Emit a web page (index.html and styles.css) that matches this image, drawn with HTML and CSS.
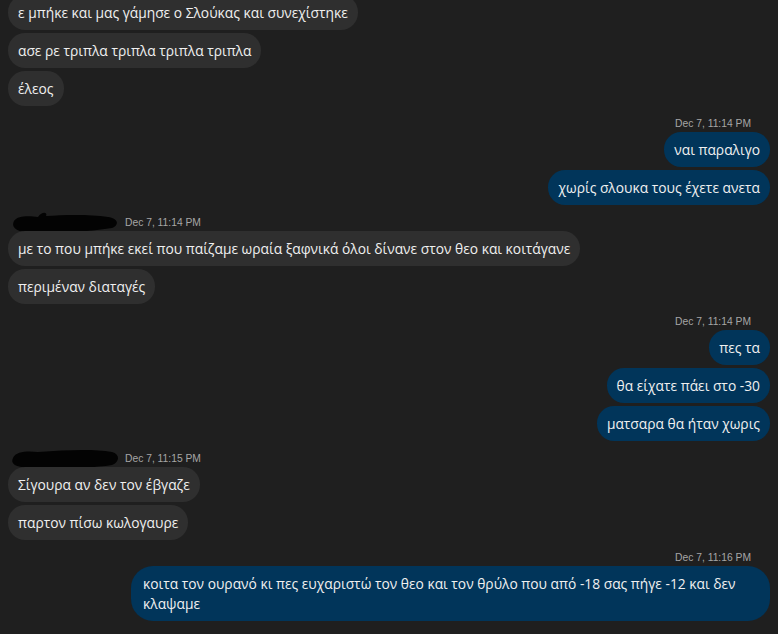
FILE: index.html
```html
<!DOCTYPE html>
<html lang="el">
<head>
<meta charset="utf-8">
<title>Chat</title>
<link rel="stylesheet" href="styles.css">
</head>
<body>
<div class="chat">
  <div class="group in first">
    <div class="bubble">ε μπήκε και μας γάμησε ο Σλούκας και συνεχίστηκε</div>
    <div class="bubble">ασε ρε τριπλα τριπλα τριπλα τριπλα</div>
    <div class="bubble">έλεος</div>
  </div>

  <div class="group out">
    <div class="meta"><span class="time">Dec 7, 11:14 PM</span></div>
    <div class="bubble">ναι παραλιγο</div>
    <div class="bubble">χωρίς σλουκα τους έχετε ανετα</div>
  </div>

  <div class="group in">
    <div class="meta">
      <svg class="redact" width="112" height="26" viewBox="0 0 112 26"><path d="M6 12 C10 6 22 7 30 8 C34 2 40 3 38 7 C55 6 80 5 100 8 C110 9 112 16 104 19 C80 23 50 24 28 24 C12 24 2 20 6 12 Z" fill="#030303"/></svg>
      <span class="time">Dec 7, 11:14 PM</span>
    </div>
    <div class="bubble">με το που μπήκε εκεί που παίζαμε ωραία ξαφνικά όλοι δίνανε στον θεο και κοιτάγανε</div>
    <div class="bubble">περιμέναν διαταγές</div>
  </div>

  <div class="group out">
    <div class="meta"><span class="time">Dec 7, 11:14 PM</span></div>
    <div class="bubble">πες τα</div>
    <div class="bubble">θα είχατε πάει στο -30</div>
    <div class="bubble">ματσαρα θα ήταν χωρις</div>
  </div>

  <div class="group in">
    <div class="meta">
      <svg class="redact" width="112" height="26" viewBox="0 0 112 26"><path d="M5 13 C8 6 20 6 30 7 C60 5 85 4 104 7 C112 9 112 17 104 20 C80 24 40 23 20 23 C8 22 2 19 5 13 Z" fill="#030303"/></svg>
      <span class="time">Dec 7, 11:15 PM</span>
    </div>
    <div class="bubble">Σίγουρα αν δεν τον έβγαζε</div>
    <div class="bubble">παρτον πίσω κωλογαυρε</div>
  </div>

  <div class="group out">
    <div class="meta"><span class="time">Dec 7, 11:16 PM</span></div>
    <div class="bubble wide">κοιτα τον ουρανό κι πες ευχαριστώ τον θεο και τον θρύλο που από -18 σας πήγε -12 και δεν κλαψαμε</div>
  </div>

  <div class="group in">
    <div class="meta">
      <span class="name">Λευτέρης Μ</span>
      <span class="time">Dec 7, 11:16 PM</span>
    </div>
  </div>
</div>
</body>
</html>
```

FILE: styles.css
```css
html, body {
  margin: 0;
  padding: 0;
  background: #1f1f1f;
  overflow: hidden;
}

.chat {
  display: flex;
  flex-direction: column;
  padding: 0 8px;
  margin-top: -5px;
  font-family: "Open Sans", "Noto Sans", sans-serif;
  color: #f0f0f0;
}

.group {
  display: flex;
  flex-direction: column;
  gap: 3px;
  margin-top: 8px;
}

.group.first {
  margin-top: 0;
}

.group.in {
  align-items: flex-start;
}

.group.out {
  align-items: flex-end;
}

.meta {
  display: flex;
  align-items: center;
  height: 16px;
  margin-bottom: -1px;
  font-family: "Liberation Sans", Arial, sans-serif;
  font-size: 10.3px;
  color: #a6a6a6;
}

.time {
  padding-top: 3px;
}

.group.out .meta {
  padding-right: 19px;
}

.redact {
  display: block;
  margin: 2px 5px 0 0;
  height: 26px;
}

.name {
  font-family: "Open Sans", sans-serif;
  font-weight: 700;
  font-size: 12px;
  color: #f0f0f0;
  width: 112px;
  margin-right: 5px;
  padding-left: 8px;
  padding-top: 6px;
  box-sizing: border-box;
  white-space: nowrap;
}

.bubble {
  font-size: 13.8px;
  line-height: 20px;
  padding: 7.5px 10px;
  border-radius: 17px;
  background: #2f2f2f;
}

.group.out .bubble {
  background: #01355a;
}

.bubble.wide {
  box-sizing: border-box;
  width: 639px;
  padding: 7.5px 12px;
  border-radius: 22px;
}
```
